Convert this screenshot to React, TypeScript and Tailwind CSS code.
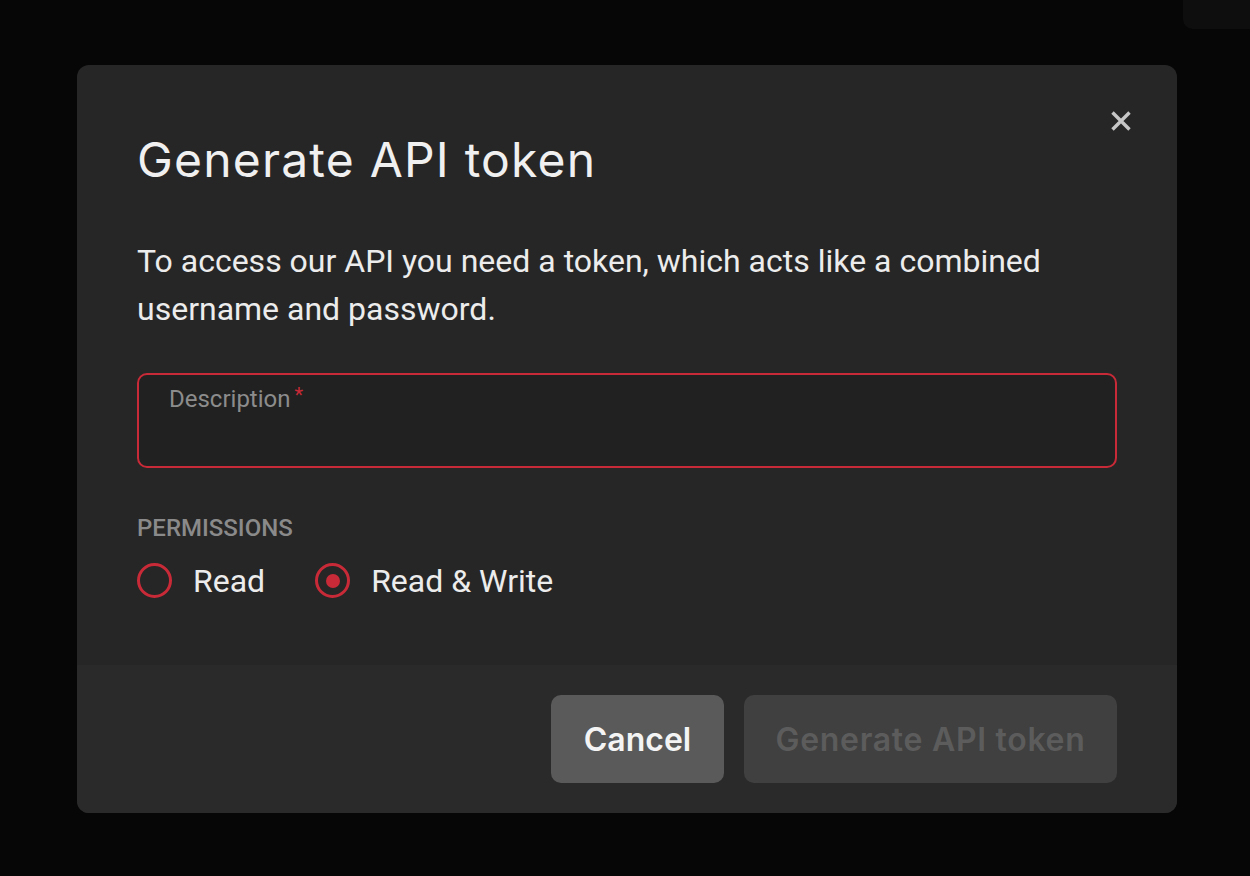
import { useState } from "react";

const RED = "border-[#c92a37]";

const Radio = ({ checked, label, onClick }: { checked: boolean; label: string; onClick: () => void }) => (
  <button type="button" onClick={onClick} className="flex items-center gap-[21px]">
    <span className={`flex h-[35px] w-[35px] items-center justify-center rounded-full border-[3px] ${RED}`}>
      {checked && <span className="h-[14px] w-[14px] rounded-full bg-[#c92a37]" />}
    </span>
    <span className="text-[32px] leading-[36px] text-[#ececec]">{label}</span>
  </button>
);

export default function App() {
  const [perm, setPerm] = useState<"read" | "write">("write");

  return (
    <div className="relative flex min-h-screen items-center justify-center bg-[#060606] pl-[4px] pt-[1px] font-['Roboto',sans-serif]">
      <div className="absolute right-0 top-0 h-[29px] w-[67px] rounded-bl-[10px] bg-[#0e0e0e]" />

      <div className="relative w-[1100px] overflow-hidden rounded-[12px] bg-[#262626]">
        <button type="button" className="absolute right-[45px] top-[45px] h-[22px] w-[22px] text-[#c6c6c6]">
          <svg viewBox="0 0 22 22" className="h-[22px] w-[22px]" fill="none" stroke="currentColor" strokeWidth="3.4">
            <path d="M2.5 2.5L19.5 19.5M19.5 2.5L2.5 19.5" />
          </svg>
        </button>

        <div className="px-[60px] pb-[66px] pt-[66px]">
          <h1 className="font-['Inter',sans-serif] text-[48px] font-normal leading-[58px] tracking-[1.2px] text-[#f0f0f0]">
            Generate API token
          </h1>

          <p className="mt-[48px] text-[32px] leading-[48px] text-[#ececec]">
            To access our API you need a token, which acts like a combined
            <br />
            username and password.
          </p>

          <div className="mt-[40px] h-[95px] rounded-[10px] border-2 border-[#c92a37] bg-[#212121] pl-[30px] pt-[9px]">
            <span className="text-[24px] leading-[30px] text-[#8c8c8c]">
              Description
              <span className="ml-[4px] align-top text-[20px] leading-[22px] text-[#c92a37]">*</span>
            </span>
          </div>

          <div className="mt-[46px] text-[24px] font-medium uppercase leading-[28px] text-[#8a8a8a]">
            Permissions
          </div>

          <div className="mt-[21px] flex items-center gap-[50px]">
            <Radio checked={perm === "read"} label="Read" onClick={() => setPerm("read")} />
            <Radio checked={perm === "write"} label="Read & Write" onClick={() => setPerm("write")} />
          </div>
        </div>

        <div className="flex justify-end gap-[20px] bg-[#2a2a2a] px-[60px] py-[30px]">
          <button
            type="button"
            className="h-[88px] w-[173px] rounded-[10px] bg-[#5a5a5a] pt-[3px] font-['Inter',sans-serif] text-[32px] font-semibold text-[#f4f4f4]"
          >
            Cancel
          </button>
          <button
            type="button"
            disabled
            className="h-[88px] w-[373px] rounded-[10px] bg-[#404040] pt-[3px] font-['Inter',sans-serif] text-[32px] font-semibold tracking-[0.7px] text-[#5c5c5c]"
          >
            Generate API token
          </button>
        </div>
      </div>
    </div>
  );
}
